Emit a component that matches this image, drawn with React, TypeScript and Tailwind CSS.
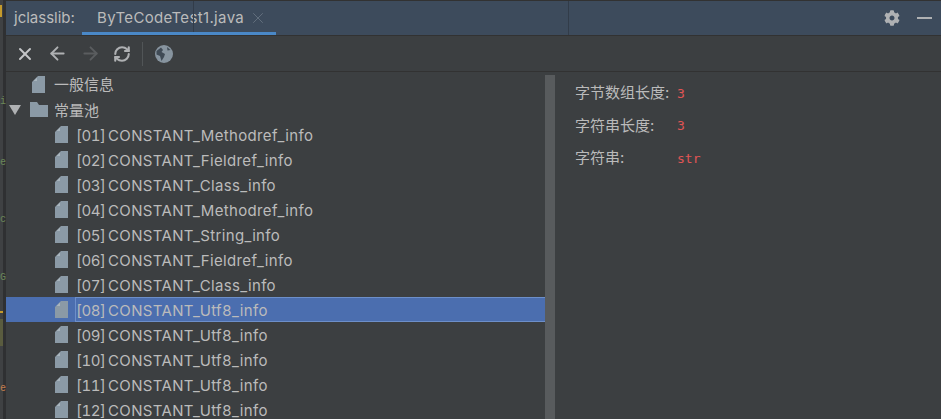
import React from "react";
import { X, ArrowLeft, ArrowRight, RefreshCw } from "lucide-react";
import { FaCog } from "react-icons/fa";

const ENTRIES = [
  ["[01]", "CONSTANT_Methodref_info"],
  ["[02]", "CONSTANT_Fieldref_info"],
  ["[03]", "CONSTANT_Class_info"],
  ["[04]", "CONSTANT_Methodref_info"],
  ["[05]", "CONSTANT_String_info"],
  ["[06]", "CONSTANT_Fieldref_info"],
  ["[07]", "CONSTANT_Class_info"],
  ["[08]", "CONSTANT_Utf8_info"],
  ["[09]", "CONSTANT_Utf8_info"],
  ["[10]", "CONSTANT_Utf8_info"],
  ["[11]", "CONSTANT_Utf8_info"],
  ["[12]", "CONSTANT_Utf8_info"],
];

const FileIcon = () => (
  <svg width="13" height="17" viewBox="0 0 13 17" className="shrink-0">
    <path d="M0 6 L6 0 H13 V17 H0 Z" fill="#8b9aa6" />
    <path d="M1.5 5 L5 1.5 V5 Z" fill="#a9b5be" />
  </svg>
);

const FolderIcon = () => (
  <svg width="18" height="15" viewBox="0 0 18 15" className="shrink-0">
    <path d="M0 0 H7 L9 3 H18 V15 H0 Z" fill="#8b9aa6" />
  </svg>
);

const GlobeIcon = () => (
  <svg width="18" height="18" viewBox="0 0 18 18">
    <circle cx="9" cy="9" r="9" fill="#87949f" />
    <path d="M1.5 6 L6 2.5 L8 5 L6.5 7 L10 9 L9 12 L6.5 16 L5 11 L1.5 9.5 Z" fill="#3f4a55" />
    <path d="M12 2 L15.5 5 L12.5 5.5 Z" fill="#3f4a55" />
  </svg>
);

const Row = ({ index, label, selected }: { index: string; label: string; selected: boolean }) => (
  <div
    className={`h-[25px] flex items-center pl-[49px] shrink-0 ${
      selected ? "bg-[#4b6eaf]" : ""
    }`}
  >
    <FileIcon />
    <span
      className={`ml-[7px] pt-[3px] h-[25px] flex-1 flex items-center tabular-nums border-l border-y ${
        selected ? "border-[#6d8fc9]" : "border-transparent"
      }`}
    >
      <span className="w-[32px] shrink-0 tracking-[-0.4px]">{index}</span>
      <span>{label}</span>
    </span>
  </div>
);

const Detail = ({ label, value }: { label: string; value: string }) => (
  <div className="h-[32.5px] flex items-center">
    <span className="w-[102px] text-[15px] tracking-normal text-[#bbbbbb]">{label}</span>
    <span className="font-['DejaVu_Sans_Mono',monospace] text-[13px] text-[#e05555]">
      {value}
    </span>
  </div>
);

// leftover editor text peeking out behind the tool window
const EditorEdge = () => (
  <div className="relative w-[6px] shrink-0 bg-[#3f4143] font-['Liberation_Mono',monospace] text-[10px] leading-none text-[#6a8759]">
    <div className="absolute left-[3px] top-0 bottom-0 w-[3px] bg-[#2f3032]" />
    <div className="absolute left-0 top-[5px] w-[2px] h-[12px] bg-[#c49a2c]" />
    <span className="absolute left-0 top-[97px]">i</span>
    <span className="absolute left-0 top-[158px]">e</span>
    <span className="absolute left-0 top-[215px]">c</span>
    <span className="absolute left-0 top-[273px]">G</span>
    <div className="absolute left-0 top-[311px] w-[3px] h-[2px] bg-[#c49a2c]" />
    <div className="absolute left-0 top-[319px] w-[3px] h-[27px] bg-[#5a5c3f]" />
    <span className="absolute left-0 top-[384px] text-[#c27d4e]">e</span>
  </div>
);

export default function App() {
  return (
    <div className="w-[941px] h-[419px] flex overflow-hidden bg-[#3c3f41] text-[#bbbbbb] font-['Inter','Noto_Sans_CJK_SC',sans-serif]">
      <EditorEdge />
      <div className="flex-1 flex flex-col min-w-0">
        <div className="h-[36px] shrink-0 flex items-center bg-[#3d4b5c] border-t border-b border-[#323232] text-[15px] tracking-[0.35px]">
          <span className="ml-[8px] w-[68px] tracking-normal">jclasslib:</span>
          <div className="relative w-[194px] h-full flex items-center pl-[15px]">
            <span>ByTeCodeTest1.java</span>
            <X size={18} strokeWidth={1} className="ml-[5px] text-[#6f7b88]" />
            <div className="absolute left-[111px] top-0 bottom-0 w-px bg-[#323c49]" />
            <div className="absolute left-0 right-0 bottom-0 h-[3px] bg-[#4a88c7]" />
          </div>
          <div className="w-px h-full bg-[#323c49] ml-[292px]" />
          <FaCog size={16} className="ml-auto text-[#afb1b3]" />
          <div className="ml-[17px] mr-[9px] w-[15px] h-[2px] bg-[#afb1b3]" />
        </div>
        <div className="h-[36px] shrink-0 flex items-center pl-[9px] border-b border-[#323232]">
          <X size={20} strokeWidth={2.4} className="text-[#c4c6c8]" />
          <ArrowLeft size={21} strokeWidth={2.2} className="ml-[12px] text-[#afb1b3]" />
          <ArrowRight size={21} strokeWidth={2.2} className="ml-[12px] text-[#5a5d5f]" />
          <RefreshCw size={18} strokeWidth={2.8} className="ml-[12px] text-[#afb1b3]" />
          <div className="w-px h-[24px] bg-[#515557] ml-[11px]" />
          <div className="ml-[12px]">
            <GlobeIcon />
          </div>
        </div>
        <div className="flex-1 flex min-h-0">
          <div className="w-[539px] shrink-0 flex flex-col overflow-hidden text-[15px] tracking-[0.35px]">
            <div className="h-[25px] shrink-0 flex items-center pl-[26px]">
              <FileIcon />
              <span className="ml-[9px] pt-[2px] tracking-normal">一般信息</span>
            </div>
            <div className="h-[25px] shrink-0 flex items-center pl-[3px]">
              <span className="w-0 h-0 border-x-[6px] border-x-transparent border-t-[10px] border-t-[#afb1b3]" />
              <span className="ml-[9px]">
                <FolderIcon />
              </span>
              <span className="ml-[6px] pt-[3px] tracking-normal">常量池</span>
            </div>
            {ENTRIES.map(([index, label], i) => (
              <Row key={index} index={index} label={label} selected={i === 7} />
            ))}
          </div>
          <div className="w-[10px] shrink-0 mt-[3px] bg-[#585b5d]" />
          <div className="flex-1 pl-[20px] pt-[5px]">
            <Detail label="字节数组长度:" value="3" />
            <Detail label="字符串长度:" value="3" />
            <Detail label="字符串:" value="str" />
          </div>
        </div>
      </div>
    </div>
  );
}
